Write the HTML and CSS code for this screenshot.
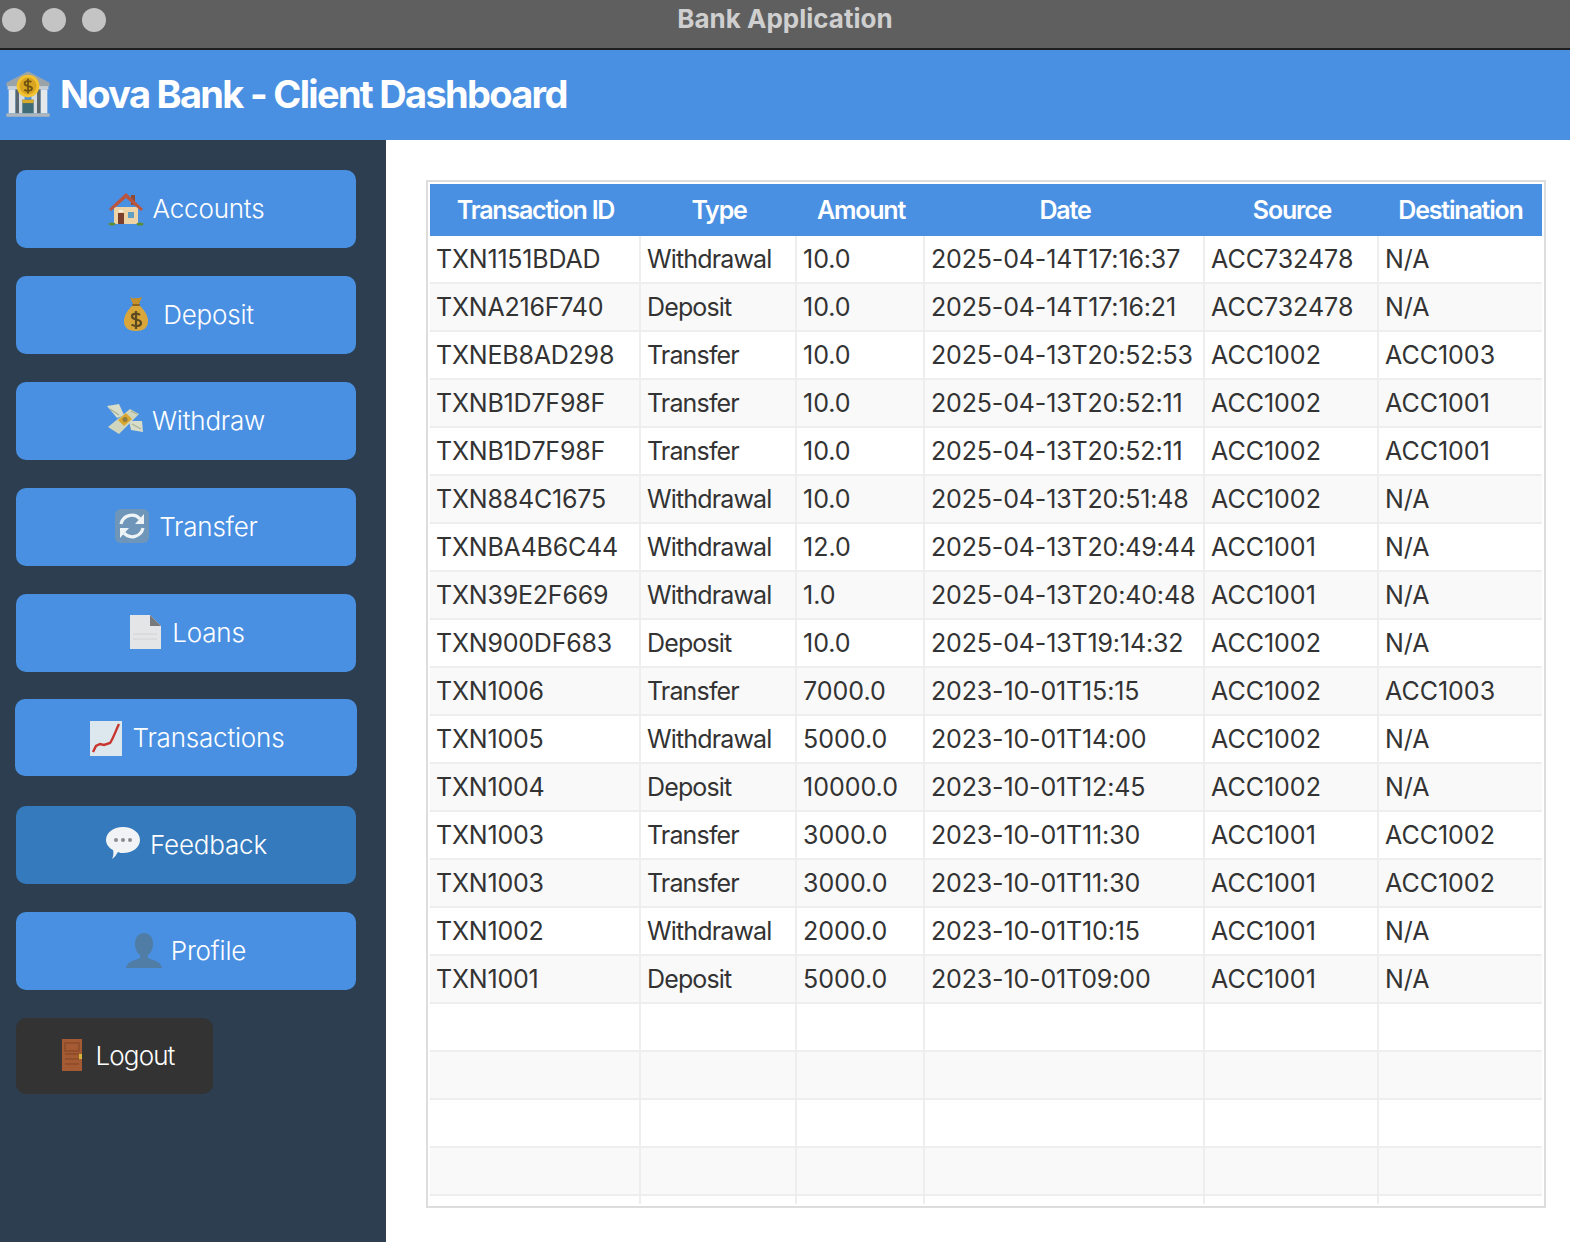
FILE: index.html
```html
<!DOCTYPE html>
<html lang="en">
<head>
<meta charset="utf-8">
<title>Bank Application</title>
<link rel="stylesheet" href="styles.css">
</head>
<body>
<div class="window">
  <div class="titlebar">
    <div class="lights"><span class="light"></span><span class="light"></span><span class="light"></span></div>
    <div class="window-title">Bank Application</div>
  </div>
  <header class="banner">
    <svg class="bank-icon" viewBox="0 0 44 44"><path d="M22 2 41 12v3H3v-3z" fill="#9aa3a8"/><rect x="4" y="15" width="36" height="3" fill="#c8ced2"/><rect x="5" y="18" width="6" height="21" fill="#e4e8ea"/><rect x="14" y="18" width="5" height="21" fill="#d5dbde"/><rect x="25" y="18" width="5" height="21" fill="#d5dbde"/><rect x="33" y="18" width="6" height="21" fill="#e4e8ea"/><rect x="11" y="18" width="3" height="21" fill="#59666d"/><rect x="30" y="18" width="3" height="21" fill="#59666d"/><rect x="17" y="27" width="10" height="12" fill="#3e6b75"/><rect x="17" y="27" width="10" height="3" fill="#d9a92b"/><rect x="3" y="39" width="38" height="3" fill="#aeb6ba"/><circle cx="22" cy="15" r="10" fill="#f2c230"/><circle cx="22" cy="15" r="7.5" fill="#d9a520"/><path d="M25 11.5c-2-1.5-6-1-6 1.3 0 3.4 6.500 1.400 6.500 4.400 0 2.300-4.500 2.400-6.800 1M22 8.500v13" fill="none" stroke="#6f5410" stroke-width="1.600"/></svg>
    <h1 class="banner-title">Nova Bank - Client Dashboard</h1>
  </header>
  <div class="main">
    <nav class="sidebar">
      <button class="nav-btn">
        <svg class="icon" viewBox="0 0 36 36"><path d="M23 5h4v10h-4z" fill="#8f4a36"/><path d="M6 17h24v17H6z" fill="#edd3a5"/><path d="M18 3 1 19l2 2L18 8l15 13 2-2z" fill="#b9543f"/><rect x="10" y="23" width="6" height="11" fill="#7c3f2e"/><rect x="20" y="22" width="6" height="6" fill="#5f9fc6"/><rect x="11" y="20" width="4" height="2" fill="#f6eedd"/><ellipse cx="4" cy="34" rx="3.500" ry="1.500" fill="#5c8e3a"/><ellipse cx="32" cy="34" rx="3.500" ry="1.500" fill="#5c8e3a"/></svg>
        <span>Accounts</span>
      </button>
      <button class="nav-btn">
        <svg class="icon" viewBox="0 0 36 36"><path d="M12 1c2 1 3 2 6 1 3 1 4-1 6-1l-3 7h-6z" fill="#c58f2c"/><path d="M14 8h8l-1 3h-6z" fill="#8d6420"/><path d="M14 10h8c4 4 8 9 8 15 0 7-5 10-12 10S6 32 6 25c0-6 4-11 8-15z" fill="#d9a63a"/><path d="M22 19c-2-2-8-2-8 1.500 0 4 9 2 9 6.500 0 4-7 3.500-9.500 1.500M18 15v18" fill="none" stroke="#5b4a20" stroke-width="2.200"/></svg>
        <span>Deposit</span>
      </button>
      <button class="nav-btn">
        <svg class="icon" viewBox="0 0 36 36"><path d="M0 4l12-2 5 11-7 3zM22 19l13 0 1 11-12-2z" fill="#d7ddc9"/><path d="M1 25 23 7l9 5-20 20z" fill="#cfd6bd"/><path d="M3 7l9 6M25 22l9 5M24 9l6 3" stroke="#a8b295" stroke-width="1.200" fill="none"/><path d="M11 18l8-7 6 6-8 7z" fill="#d9a62f"/><circle cx="18" cy="17.500" r="2.500" fill="#8f7d44"/></svg>
        <span>Withdraw</span>
      </button>
      <button class="nav-btn">
        <svg class="icon" viewBox="0 0 36 36"><rect x="1" y="1" width="34" height="34" rx="6" fill="#6f96b9"/><path d="M7 16a11 11 0 0 1 19-5M29 20a11 11 0 0 1-19 5" fill="none" stroke="#eef3f6" stroke-width="3.200"/><path d="M30 6v10h-9zM6 30V20h9z" fill="#eef3f6"/></svg>
        <span>Transfer</span>
      </button>
      <button class="nav-btn">
        <svg class="icon" viewBox="0 0 36 36"><path d="M3 1h20l11 11v23H3z" fill="#e3e5e6"/><path d="M23 1l11 11-11 0z" fill="#77797b"/><path d="M6 20h24M6 25h24" stroke="#d2d4d5" stroke-width="1"/></svg>
        <span>Loans</span>
      </button>
      <button class="nav-btn nav-btn-wide">
        <svg class="icon" viewBox="0 0 36 36"><rect x="2" y="1" width="32" height="35" fill="#dde7ee"/><path d="M5 32l3-6 4-2 4 1 6-2c3-4 6-13 9-19" fill="none" stroke="#c8362f" stroke-width="2.400"/></svg>
        <span>Transactions</span>
      </button>
      <button class="nav-btn nav-btn-active">
        <svg class="icon" viewBox="0 0 36 36"><path d="M18 1c10 0 17 6 17 13s-7 13-17 13c-2 0-3 0-5-1-2 3-3 5-6 7 1-2 2-6 1-9-4-2-7-6-7-10C1 7 8 1 18 1z" fill="#f1f3f5"/><circle cx="11" cy="14" r="2" fill="#8a8d90"/><circle cx="18" cy="14" r="2" fill="#8a8d90"/><circle cx="25" cy="14" r="2" fill="#8a8d90"/></svg>
        <span>Feedback</span>
      </button>
      <button class="nav-btn">
        <svg class="icon" viewBox="0 0 36 36"><path d="M18 1c6 0 9 5 9 11 0 5-2 9-5 11v3c4 2 13 3 14 10H0c1-7 10-8 14-10v-3c-3-2-5-6-5-11C9 6 12 1 18 1z" fill="#4f7da6"/></svg>
        <span>Profile</span>
      </button>
      <button class="nav-btn logout-btn">
        <svg class="icon" viewBox="0 0 36 36"><rect x="11" y="2" width="20" height="32" fill="#a45a33"/><path d="M14 6h14v8H14zM14 17h14M14 22h14M14 27h14" fill="none" stroke="#8c4a2a" stroke-width="1.500"/><rect x="28" y="17" width="3" height="5" fill="#d4b23a"/></svg>
        <span class="logout-label">Logout</span>
      </button>
    </nav>
    <main class="content">
      <div class="table-frame">
        <table class="tx-table">
          <colgroup><col class="c1"><col class="c2"><col class="c3"><col class="c4"><col class="c5"><col class="c6"></colgroup>
          <thead><tr><th>Transaction ID</th><th>Type</th><th>Amount</th><th>Date</th><th>Source</th><th>Destination</th></tr></thead>
          <tbody>
            <tr><td>TXN1151BDAD</td><td>Withdrawal</td><td>10.0</td><td>2025-04-14T17:16:37</td><td>ACC732478</td><td>N/A</td></tr>
            <tr><td>TXNA216F740</td><td>Deposit</td><td>10.0</td><td>2025-04-14T17:16:21</td><td>ACC732478</td><td>N/A</td></tr>
            <tr><td>TXNEB8AD298</td><td>Transfer</td><td>10.0</td><td>2025-04-13T20:52:53</td><td>ACC1002</td><td>ACC1003</td></tr>
            <tr><td>TXNB1D7F98F</td><td>Transfer</td><td>10.0</td><td>2025-04-13T20:52:11</td><td>ACC1002</td><td>ACC1001</td></tr>
            <tr><td>TXNB1D7F98F</td><td>Transfer</td><td>10.0</td><td>2025-04-13T20:52:11</td><td>ACC1002</td><td>ACC1001</td></tr>
            <tr><td>TXN884C1675</td><td>Withdrawal</td><td>10.0</td><td>2025-04-13T20:51:48</td><td>ACC1002</td><td>N/A</td></tr>
            <tr><td>TXNBA4B6C44</td><td>Withdrawal</td><td>12.0</td><td>2025-04-13T20:49:44</td><td>ACC1001</td><td>N/A</td></tr>
            <tr><td>TXN39E2F669</td><td>Withdrawal</td><td>1.0</td><td>2025-04-13T20:40:48</td><td>ACC1001</td><td>N/A</td></tr>
            <tr><td>TXN900DF683</td><td>Deposit</td><td>10.0</td><td>2025-04-13T19:14:32</td><td>ACC1002</td><td>N/A</td></tr>
            <tr><td>TXN1006</td><td>Transfer</td><td>7000.0</td><td>2023-10-01T15:15</td><td>ACC1002</td><td>ACC1003</td></tr>
            <tr><td>TXN1005</td><td>Withdrawal</td><td>5000.0</td><td>2023-10-01T14:00</td><td>ACC1002</td><td>N/A</td></tr>
            <tr><td>TXN1004</td><td>Deposit</td><td>10000.0</td><td>2023-10-01T12:45</td><td>ACC1002</td><td>N/A</td></tr>
            <tr><td>TXN1003</td><td>Transfer</td><td>3000.0</td><td>2023-10-01T11:30</td><td>ACC1001</td><td>ACC1002</td></tr>
            <tr><td>TXN1003</td><td>Transfer</td><td>3000.0</td><td>2023-10-01T11:30</td><td>ACC1001</td><td>ACC1002</td></tr>
            <tr><td>TXN1002</td><td>Withdrawal</td><td>2000.0</td><td>2023-10-01T10:15</td><td>ACC1001</td><td>N/A</td></tr>
            <tr><td>TXN1001</td><td>Deposit</td><td>5000.0</td><td>2023-10-01T09:00</td><td>ACC1001</td><td>N/A</td></tr>
            <tr><td></td><td></td><td></td><td></td><td></td><td></td></tr>
            <tr><td></td><td></td><td></td><td></td><td></td><td></td></tr>
            <tr><td></td><td></td><td></td><td></td><td></td><td></td></tr>
            <tr><td></td><td></td><td></td><td></td><td></td><td></td></tr>
            <tr class="stub"><td></td><td></td><td></td><td></td><td></td><td></td></tr>
          </tbody>
        </table>
      </div>
    </main>
  </div>
</div>
</body>
</html>
```

FILE: styles.css
```css
* { box-sizing: border-box; }
html, body { margin: 0; padding: 0; }
body { font-family: Inter, "Noto Sans", "Liberation Sans", sans-serif; background: #fff; overflow: hidden; }
.window { width: 1570px; height: 1242px; display: flex; flex-direction: column; }

.titlebar { height: 50px; flex: none; background: #5f5f5f; border-bottom: 2px solid #1f1f1f; position: relative; display: flex; align-items: flex-start; justify-content: center; }
.lights { position: absolute; left: 2px; top: 8px; display: flex; gap: 16px; }
.light { width: 24px; height: 24px; border-radius: 50%; background: #c4c4c4; }
.window-title { color: #cfcfcf; font-size: 26px; font-weight: 700; line-height: 38px; }

.banner { height: 90px; flex: none; background: #4a90e2; display: flex; align-items: center; padding: 0 0 2px 3px; gap: 7px; }
.bank-icon { width: 50px; height: 50px; filter: blur(.6px); }
.banner-title { margin: 0; color: #fff; font-size: 38px; font-weight: 700; letter-spacing: -1.700px; line-height: 46px; }

.main { flex: 1; display: flex; min-height: 0; }
.sidebar { width: 386px; flex: none; background: #2c3e50; padding: 30px 30px 0 16px; display: flex; flex-direction: column; align-items: flex-start; gap: 28px; }
.nav-btn { width: 340px; height: 78px; border: 0; border-radius: 10px; background: #4a90e2; color: #fff; font-family: inherit; font-size: 26px; font-weight: 300; letter-spacing: -.2px; display: flex; align-items: center; justify-content: center; gap: 9px; padding: 0 0 2px; }
.nav-btn-wide { width: 342px; height: 77px; margin: -1px -1px 2px; padding: 0; }
.nav-btn-active { background: #357abd; }
.logout-btn { width: 197px; height: 76px; background: #333; padding-right: 4px; }
.logout-label { letter-spacing: -.9px; }
.icon { width: 36px; height: 36px; flex: none; filter: blur(.6px); }

.content { flex: 1; padding: 40px 24px 34px 40px; background: #fff; }
.table-frame { border: 2px solid #ddd; padding: 2px; height: 1028px; overflow: hidden; }
.tx-table { width: 1112px; table-layout: fixed; border-collapse: separate; border-spacing: 0; font-size: 25px; color: #333; }
.c1 { width: 211px; } .c2 { width: 156px; } .c3 { width: 128px; } .c4 { width: 280px; } .c5 { width: 174px; } .c6 { width: 163px; }
.tx-table th { height: 52px; padding: 0; background: #4a90e2; color: #fff; font-size: 25px; font-weight: 600; letter-spacing: -1.200px; text-align: center; }
.tx-table td { height: 48px; padding: 0 0 0 6px; background: #fff; border-right: 2px solid #eee; border-bottom: 2px solid #eee; white-space: nowrap; font-weight: 400; }
.tx-table td:nth-child(1) { letter-spacing: -.2px; }
.tx-table td:nth-child(2) { letter-spacing: -.85px; }
.tx-table td:nth-child(4) { letter-spacing: -.15px; }
.tx-table td:last-child { border-right: 0; }
.tx-table tbody tr:nth-child(even) td { background: #f9f9f9; }
.tx-table tr.stub td { height: 8px; padding: 0; border-bottom: 0; background: #fff; }
```
